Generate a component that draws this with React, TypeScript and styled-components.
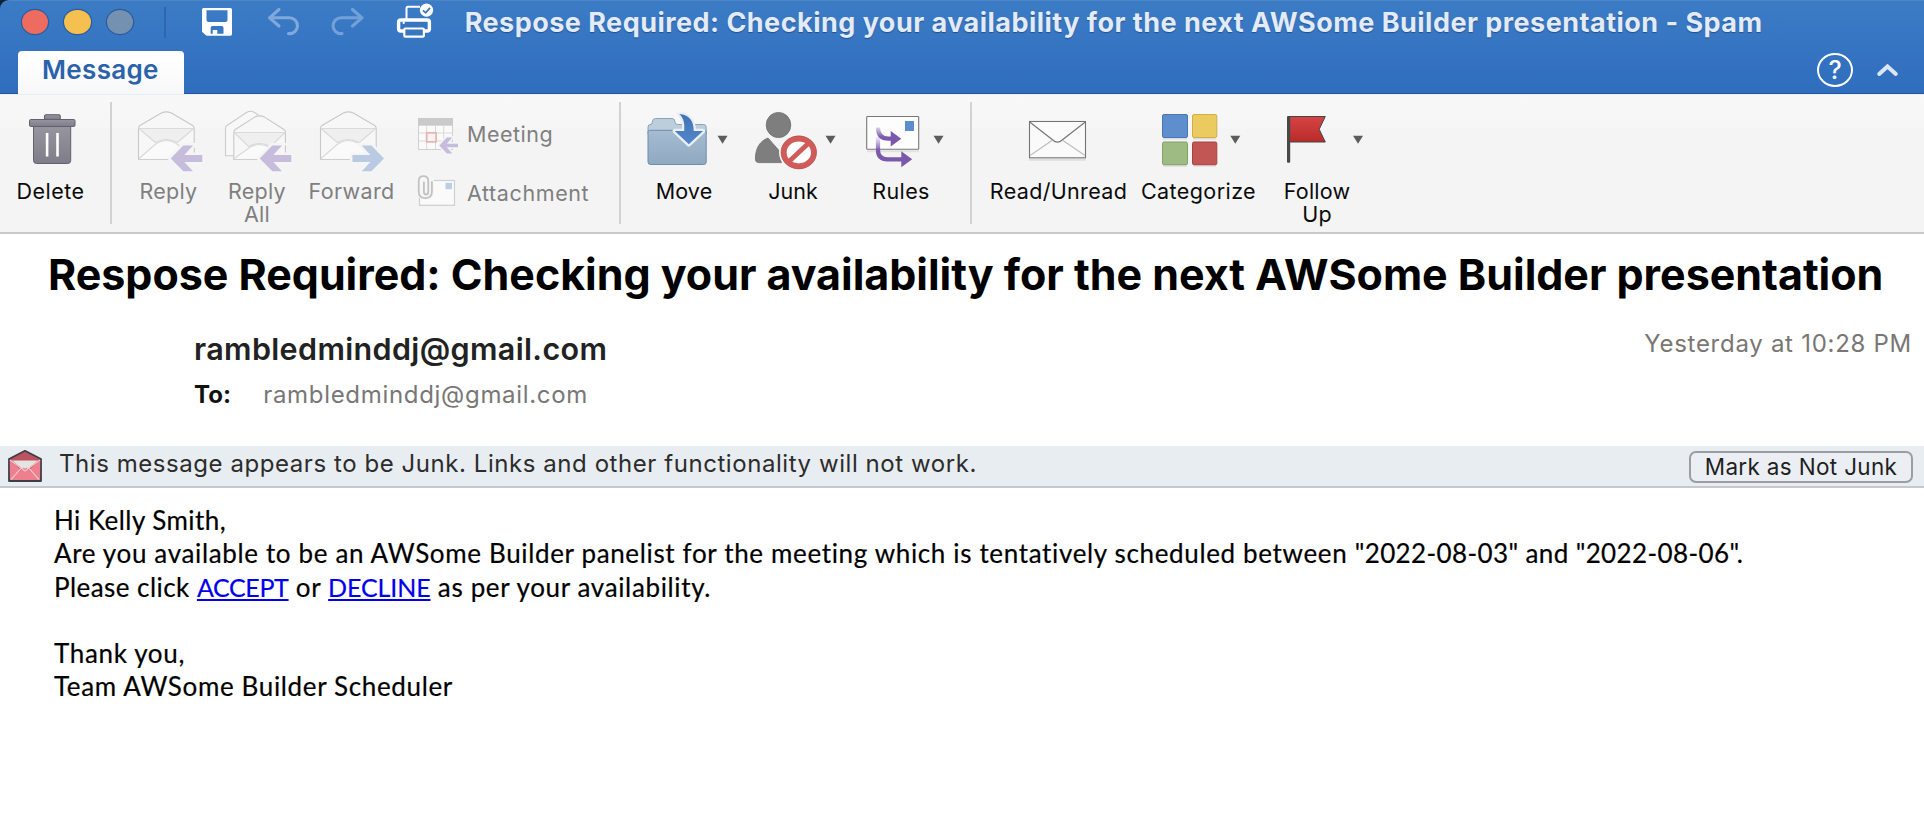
import React from 'react';
import styled, { createGlobalStyle } from 'styled-components';

const GlobalStyle = createGlobalStyle`
  * { box-sizing: border-box; }
  html, body { margin: 0; background: #fff; }
  body { font-family: Inter, "Liberation Sans", sans-serif; overflow: hidden; }
`;

const Window = styled.div`
  width: 1924px;
  height: 820px;
  display: flex;
  flex-direction: column;
  background: #fff;
  overflow: hidden;
`;

/* ---------- title bar ---------- */

const Frame = styled.div`
  background: #10233d;
  flex: none;
`;

const Header = styled.header`
  height: 94px;
  border-top-left-radius: 9px;
  background: linear-gradient(#3c7cc5, #2f6dbe);
  box-shadow: inset 0 1px 0 rgba(255, 255, 255, 0.08), inset 0 -1px 0 #1f569f;
`;

const TitleRow = styled.div`
  height: 44px;
  display: flex;
  align-items: center;
`;

const Lights = styled.div`
  display: flex;
  gap: 16px;
  margin-left: 22px;
`;

const Light = styled.span<{ $color: string }>`
  width: 26.4px;
  height: 24.5px;
  border-radius: 50%;
  background: ${(p) => p.$color};
  box-shadow: 0 0 0 1.2px #2a5d9e;
`;

const TitleDivider = styled.span`
  width: 2px;
  height: 31px;
  margin: 0 34px 0 31px;
  background: #2d67ae;
`;

const Glyph = styled.svg<{ $gap?: number }>`
  display: block;
  flex: none;
  margin-right: ${(p) => p.$gap ?? 0}px;
`;

const WindowTitle = styled.h1`
  margin: 0;
  padding-top: 2px;
  font-size: 27px;
  line-height: 32px;
  font-weight: 700;
  letter-spacing: 0.47px;
  white-space: nowrap;
  color: #e2ebf7;
  text-shadow: 0 1px 1px rgba(20, 50, 100, 0.55);
`;

const TabRow = styled.div`
  height: 50px;
  display: flex;
  align-items: flex-end;
  padding-left: 18px;
`;

const Tab = styled.div`
  width: 165.5px;
  height: 43px;
  padding: 3px 0 0 24px;
  border-radius: 4px 4px 0 0;
  background: linear-gradient(#fff, #f8f8f8);
  color: #2a63ab;
  font-size: 26px;
  line-height: 32px;
  font-weight: 600;
  letter-spacing: 0.33px;
`;

const HeaderActions = styled.div`
  display: flex;
  align-items: center;
  gap: 23px;
  margin: 0 25px 7px auto;
`;

const Help = styled.span`
  width: 36px;
  height: 34px;
  display: flex;
  align-items: center;
  justify-content: center;
  border: 2px solid #fff;
  border-radius: 50%;
  color: #fff;
  font-size: 25px;
  line-height: 28px;
  font-weight: 500;
`;

/* ---------- ribbon ---------- */

const Ribbon = styled.div`
  height: 140px;
  flex: none;
  display: flex;
  align-items: flex-start;
  border-top: 1px solid #e6eefa;
  border-bottom: 2px solid #c9c9c9;
  padding-top: 7px;
  background: linear-gradient(#f8f8f8 0, #f6f6f6 33px, #f4f4f4 34px, #f4f4f4 100%);
`;

const Group = styled.div<{ $left?: number; $right?: number }>`
  display: flex;
  flex: none;
  padding: 4px ${(p) => p.$right ?? 0}px 0 ${(p) => p.$left ?? 0}px;
`;

const Separator = styled.span`
  width: 2px;
  height: 122px;
  flex: none;
  background: #d2d2d2;
`;

const Command = styled.div<{ $width: number; $disabled?: boolean }>`
  width: ${(p) => p.$width}px;
  display: flex;
  flex-direction: column;
  align-items: center;
  gap: 4px;
  color: ${(p) => (p.$disabled ? '#7f7f7f' : '#0a0a0a')};
`;

const Label = styled.span<{ $spacing: number }>`
  font-size: 21.5px;
  line-height: 23px;
  letter-spacing: ${(p) => p.$spacing}px;
  text-align: center;
  white-space: pre;
`;

const SmallCommands = styled.div`
  display: flex;
  flex-direction: column;
  width: 186px;
  margin: -1px 0 0 13px;
`;

const SmallCommand = styled.div`
  height: 58px;
  display: flex;
  align-items: center;
  gap: 1px;
  color: #7f7f7f;

  & + & ${Label} {
    padding-top: 2px;
  }
`;

/* ---------- message header ---------- */

const MessageHead = styled.section`
  height: 212px;
  flex: none;
  padding: 15px 12px 0 48px;
`;

const Subject = styled.h2`
  margin: 0;
  font-size: 43px;
  line-height: 50px;
  font-weight: 700;
  letter-spacing: -0.03px;
  white-space: nowrap;
  color: #000;
`;

const Meta = styled.div`
  display: flex;
  justify-content: space-between;
  padding: 30px 0 0 146px;
`;

const Sender = styled.div`
  font-size: 30.5px;
  line-height: 40px;
  font-weight: 600;
  letter-spacing: 0.36px;
  color: #222;
`;

const Recipient = styled.div`
  display: flex;
  gap: 32px;
  margin-top: 11px;
  font-size: 24px;
  line-height: 30px;
  letter-spacing: 0.69px;
  color: #777;
`;

const ToLabel = styled.b`
  color: #111;
  letter-spacing: 0.1px;
`;

const SentAt = styled.time`
  font-size: 24px;
  line-height: 30px;
  letter-spacing: 0.721px;
  color: #7a7673;
`;

/* ---------- junk notice ---------- */

const JunkBar = styled.div`
  height: 42px;
  flex: none;
  display: flex;
  align-items: center;
  padding: 0 11px 0 5px;
  background: #e8edf1;
  border-bottom: 2px solid #c5c8d0;
`;

const JunkText = styled.span`
  padding: 0 0 4px 12px;
  font-size: 24px;
  line-height: 30px;
  letter-spacing: 0.56px;
  color: #2c2c2c;
`;

const NotJunkButton = styled.button`
  width: 224px;
  height: 32px;
  margin: 2px 0 0 auto;
  padding: 0;
  border: 2px solid #9b9da1;
  border-radius: 7px;
  background: #ebeff3;
  color: #1f1f1f;
  font: 400 22.5px/28px Inter, "Liberation Sans", sans-serif;
  letter-spacing: 0.33px;
`;

/* ---------- body ---------- */

const Body = styled.article`
  padding: 16px 0 0 54px;
  font-family: Lato, "Liberation Sans", sans-serif;
  font-size: 26px;
  line-height: 33.3px;
  letter-spacing: 0.65px;
  color: #000;
  -webkit-text-stroke: 0.2px;
`;

const Line = styled.p`
  margin: 0;
  min-height: 33.3px;
  white-space: nowrap;
`;

const Run = styled.span<{ $spacing: number }>`
  letter-spacing: ${(p) => p.$spacing}px;
`;

const BodyLink = styled.a<{ $spacing: number }>`
  color: #0000ee;
  font-size: 25px;
  letter-spacing: ${(p) => p.$spacing}px;
  text-decoration: underline;
  text-decoration-thickness: 2px;
  text-underline-offset: 2px;
  text-decoration-skip-ink: none;
`;

/* ---------- drawings ---------- */

const Caret = ({ x }: { x: number }) => <path d={`M${x - 5} 135.7h10l-5 8z`} fill="#5c5c5c" />;

const OpenEnvelope = ({ x, y, w }: { x: number; y: number; w: number }) => {
  const c = w / 2;
  const s = 16;
  const h = 159.5 - y;
  return (
    <g transform={`translate(${x} ${y})`} stroke="#c8c8c8" strokeWidth="1.1" strokeLinejoin="round">
      <path d={`M.5 ${h}V${s + 1}Q.5 ${s - 1} 2 ${s - 2}L${c - 5} 1.6Q${c} -.8 ${c + 5} 1.6L${w - 2} ${s - 2}Q${w - 0.5} ${s - 1} ${w - 0.5} ${s + 1}V${h}Z`} fill="#f7f7f7" />
      <path d={`M1 ${s + 1}H${w - 1}L${c + 11} ${s + 15}Q${c} ${s + 9} ${c - 11} ${s + 15}Z`} fill="#efefef" stroke="#dadada" />
      <path d={`M1 ${h - 1}L${c - 10} ${s + 16}Q${c} ${s + 10} ${c + 10} ${s + 16}L${w - 1} ${h - 1}`} fill="#fafafa" stroke="#d9d9d9" />
      <path d={`M0 ${h}H${w}`} stroke="#cfcfcf" />
    </g>
  );
};

const MailArrow = ({ x, flip, color }: { x: number; flip?: boolean; color: string }) => (
  <path
    transform={`translate(${x} 158.4)${flip ? ' scale(-1 1)' : ''}`}
    d="M0 0L12.6 -12.8H22.3L13.6 -3.5H31.6V3.5H13.6L22.3 12.8H12.6Z"
    fill={color}
    stroke="#f5f5f5"
    strokeWidth="5"
    paintOrder="stroke"
  />
);

const commandIcon = (x: number, width: number) => ({
  width,
  height: 70,
  viewBox: `${x} 106 ${width} 70`,
});

const DeleteIcon = () => (
  <Glyph {...commandIcon(0, 101)}>
    <defs>
      <linearGradient id="bin" x2="0" y2="1">
        <stop stopColor="#97969f" />
        <stop offset="1" stopColor="#7d7c89" />
      </linearGradient>
    </defs>
    <g fill="url(#bin)" stroke="#63626c">
      <path d="M33.5 126h37.2v34.5q0 3-3 3H36.5q-3 0-3-3z" />
      <path d="M44.5 119.5v-3.5q0-1.3 1.3-1.3h13.2q1.3 0 1.3 1.3v3.5z" />
      <rect x="29.5" y="119.5" width="45.5" height="7" rx="1.2" />
    </g>
    <path d="M47.1 133v23.5M57.5 133v23.5" stroke="#fff" strokeWidth="2.6" />
  </Glyph>
);

const ReplyIcon = () => (
  <Glyph {...commandIcon(124, 89)}>
    <OpenEnvelope x={138} y={111.5} w={56.7} />
    <MailArrow x={170.7} color="#c6bcdc" />
  </Glyph>
);

const ReplyAllIcon = () => (
  <Glyph {...commandIcon(213, 88)}>
    <path d="M233 155.8h-7.5V128q0-1.5 1.5-2.5l19.5-13q4-2.5 8 0l4 2.5" fill="#f8f8f8" stroke="#cbcbcb" strokeWidth="1.1" />
    <OpenEnvelope x={233.3} y={115.5} w={52.6} />
    <MailArrow x={259.7} color="#c6bcdc" />
  </Glyph>
);

const ForwardIcon = () => (
  <Glyph {...commandIcon(301, 101)}>
    <OpenEnvelope x={320} y={111.5} w={56.7} />
    <MailArrow x={384} flip color="#b9cae2" />
  </Glyph>
);

const MeetingIcon = () => (
  <Glyph width="51" height="58" viewBox="415 105 51 58">
    <rect x="418.5" y="118.5" width="34" height="31" fill="#fafafa" stroke="#d0d0d0" />
    <path d="M418.5 133h34M418.5 141h34M426.7 126v23M435.5 126v23M443.7 126v23" stroke="#d9d9d9" />
    <rect x="418" y="118" width="35" height="7.7" fill="#cacaca" />
    <rect x="426.7" y="132.8" width="9.4" height="9" fill="#faf3f3" stroke="#e8b3b3" strokeWidth="1.7" />
    <path d="M439.3 145.5l7.5-8h5.5l-5.5 6.2H458v3.5h-11.2l5.5 6.2h-5.5z" fill="#c6bcdc" stroke="#f5f5f5" strokeWidth="3" paintOrder="stroke" />
  </Glyph>
);

const AttachmentIcon = () => (
  <Glyph width="51" height="58" viewBox="415 163 51 58">
    <rect x="419.5" y="180.5" width="35" height="24.8" fill="#fafafa" stroke="#cfcfcf" strokeWidth="1.2" />
    <rect x="445.5" y="182.8" width="6.5" height="6.4" fill="#bccde8" />
    <rect x="416.5" y="174" width="17.5" height="25.5" rx="8" fill="#f6f6f6" />
    <path
      d="M428.3 181.5v10q0 3-2.2 3t-2.2-3v-9M418.7 182v-1q0-4.8 4.8-4.8t4.8 4.8M418.7 181v10.5q0 6.7 6.6 6.7t6.6-6.7V182"
      fill="none"
      stroke="#c2c2c2"
      strokeWidth="1.8"
      strokeLinecap="round"
    />
  </Glyph>
);

const MoveIcon = () => (
  <Glyph {...commandIcon(632, 104)}>
    <defs>
      <linearGradient id="folder" x2="0" y2="1">
        <stop stopColor="#a5bcd1" />
        <stop offset="1" stopColor="#8fa9c2" />
      </linearGradient>
      <linearGradient id="drop" x2="0" y2="1">
        <stop stopColor="#3f72b8" />
        <stop offset="1" stopColor="#5487c9" />
      </linearGradient>
    </defs>
    <path d="M648 134v-7q0-2.5 3-2.7 1 0 1.2-2 .3-3.8 3.3-3.8H672q2.7 0 3 3.3 0 2.7 2.5 2.7H703.5q2.7 0 2.7 2.7V134z" fill="#bccddb" stroke="#8ba3ba" />
    <path d="M648 132q0-1.7 1.7-1.7h54.8q1.7 0 1.7 1.7v30q0 2.5-2.5 2.5h-53.2q-2.5 0-2.5-2.5z" fill="url(#folder)" stroke="#6f8da9" />
    <path d="M679.3 114C689 114.5 694 121 693.7 131H703L688.8 144.3 674.8 131H684.2C685 123 683.5 118 679.3 114Z" fill="url(#drop)" stroke="#e9eff6" strokeWidth="4.5" strokeLinejoin="round" paintOrder="stroke" />
    <Caret x={722.5} />
  </Glyph>
);

const JunkIcon = () => (
  <Glyph {...commandIcon(736, 114)}>
    <g fill="#7e7e7e" stroke="#6e6e6e" strokeWidth=".8">
      <ellipse cx="778.5" cy="125" rx="12.3" ry="12.6" />
      <path d="M768 138L779 150.5 781.5 162.6H758.5Q755.4 162.6 755.4 159C755.4 148 760 141 768 138Z" />
    </g>
    <ellipse cx="798.8" cy="152.4" rx="19.8" ry="18.5" fill="#f5f5f5" />
    <ellipse cx="798.8" cy="152.4" rx="15" ry="13.8" fill="#fff" stroke="#d05c59" strokeWidth="5.6" />
    <path d="M788.5 162L809 142.8" stroke="#d05c59" strokeWidth="4.8" />
    <ellipse cx="798.8" cy="152.4" rx="17.7" ry="16.4" fill="none" stroke="#bd4a48" strokeWidth=".7" />
    <Caret x={830.5} />
  </Glyph>
);

const RulesIcon = () => (
  <Glyph {...commandIcon(850, 102)}>
    <defs>
      <linearGradient id="stem" gradientUnits="userSpaceOnUse" x1="0" x2="0" y1="127" y2="137">
        <stop stopColor="#7a58ac" stopOpacity=".2" />
        <stop offset="1" stopColor="#7a58ac" />
      </linearGradient>
      <linearGradient id="stemLow" gradientUnits="userSpaceOnUse" x1="0" x2="0" y1="138" y2="151">
        <stop stopColor="#7a58ac" stopOpacity=".15" />
        <stop offset="1" stopColor="#7a58ac" />
      </linearGradient>
    </defs>
    <path d="M867 151.3h52" stroke="#e2e2e2" strokeWidth="2" />
    <rect x="866.7" y="116.5" width="52" height="32.7" rx=".8" fill="#fdfdfd" stroke="#777" strokeWidth="1.1" />
    <rect x="905" y="121" width="9" height="10" fill="#5d8ccf" />
    <g fill="none" strokeWidth="4.2">
      <path d="M878 127.5Q878 138.7 888.5 138.7H892" stroke="url(#stem)" />
      <path d="M878 137V150Q878 159.3 887.5 159.3H903" stroke="url(#stemLow)" />
    </g>
    <path d="M890.7 131L901.3 138.7 890.7 146.5zM901.3 151.2L912.2 159.3 901.3 167.3z" fill="#7a58ac" />
    <Caret x={938.5} />
  </Glyph>
);

const ReadIcon = () => (
  <Glyph {...commandIcon(982, 153)}>
    <path d="M1029 159.7h57" stroke="#dedede" strokeWidth="2" />
    <rect x="1029.5" y="121.5" width="56" height="36.3" fill="#fafafa" stroke="#747474" strokeWidth="1.1" />
    <path d="M1030 155.5L1052 140.5M1085 155.5L1063 140.5" stroke="#c0c0c0" strokeWidth="1.4" />
    <path d="M1029.7 122L1052.5 139.7Q1057.5 144.5 1062.5 139.7L1085.3 122" fill="#fbfbfb" stroke="#777" strokeWidth="1.2" />
  </Glyph>
);

const CategorizeIcon = () => (
  <Glyph {...commandIcon(1135, 127)}>
    <path d="M1163 138.5h24M1193 138.5h23M1163 165.7h24M1193 165.7h23" stroke="#dcdcdc" strokeWidth="2" />
    <rect x="1162.5" y="114.5" width="25" height="23" rx="1.5" fill="#5f8ecd" stroke="#4a76b4" />
    <rect x="1192.5" y="114.5" width="24.3" height="23" rx="1.5" fill="#ebca60" stroke="#cfae48" />
    <rect x="1162.5" y="142" width="25" height="22.7" rx="1.5" fill="#9dbb82" stroke="#81a167" />
    <rect x="1192.5" y="142" width="24.3" height="22.7" rx="1.5" fill="#c15654" stroke="#a44240" />
    <Caret x={1235.3} />
  </Glyph>
);

const FlagIcon = () => (
  <Glyph {...commandIcon(1262, 110)}>
    <defs>
      <linearGradient id="flag" x2="0" y2="1">
        <stop stopColor="#d64444" />
        <stop offset="1" stopColor="#b82b29" />
      </linearGradient>
    </defs>
    <path d="M1289 116.5H1325.3L1319.2 129.3 1325.3 142H1289z" fill="url(#flag)" stroke="#444" strokeWidth="1" />
    <rect x="1287" y="116" width="3.2" height="46.7" rx="1" fill="#484848" />
    <Caret x={1358} />
  </Glyph>
);

const JunkMailIcon = () => (
  <Glyph width="42" height="38" viewBox="5 449 42 38">
    <path d="M9 461L25 452.8 41 461V483H9Z" fill="#bd5260" stroke="#3c3f44" strokeWidth="1.8" strokeLinejoin="round" />
    <path d="M12 462.5h26L25 473z" fill="#e4e2e2" />
    <path d="M9.8 462L20.5 471.5 10 482.2zM40.2 462L29.5 471.5 40 482.2z" fill="#ee7f8f" />
    <path d="M10 482L25 468.5 40 482z" fill="#ee7f8f" />
    <path d="M10 462L25 473 40 462M11 481.5L21 470.5M39 481.5L29 470.5" fill="none" stroke="#f3c4ca" strokeWidth="1.2" />
    <path d="M17.5 464.5H32.5L25 470.8z" fill="#e4e4e2" />
  </Glyph>
);

const SaveIcon = () => (
  <Glyph width="34" height="32" viewBox="200 6 34 32" $gap={33}>
    <path
      d="M203.5 8H230.5Q232 8 232 9.5V34.3Q232 35.7 230.5 35.7H206.5L202 31.8V9.5Q202 8 203.5 8ZM206.5 10.3V20Q206.5 22 208.5 22H225.5Q227.5 22 227.5 20V10.3ZM212.5 26Q210.7 26 210.7 27.7V33.7H212.7V30H217.3V33.7H223.5V27.7Q223.5 26 221.7 26Z"
      fill="#fff"
      fillRule="evenodd"
    />
  </Glyph>
);

const UndoIcon = () => (
  <Glyph width="34" height="32" viewBox="267 6 34 32" $gap={29}>
    <path d="M279 9.5L269.5 17.8 279 26M270 17.8H289.5A8 7.9 0 0 1 289.5 33.6H288.5" fill="none" stroke="#7fa8dc" strokeWidth="3.1" strokeLinecap="round" strokeLinejoin="round" />
  </Glyph>
);

const RedoIcon = () => (
  <Glyph width="34" height="32" viewBox="330 6 34 32" $gap={30}>
    <path d="M352.5 9.5L362 17.8 352.5 26M361.5 17.8H341A8 7.9 0 0 0 341 33.6H342" fill="none" stroke="#74a0d8" strokeWidth="3.1" strokeLinecap="round" strokeLinejoin="round" />
  </Glyph>
);

const PrintIcon = () => (
  <Glyph width="42" height="38" viewBox="394 3 42 38" $gap={28.5}>
    <path d="M406.5 19V8.3Q406.5 6.8 408 6.8H420" fill="none" stroke="#fff" strokeWidth="2" />
    <rect x="398.6" y="20" width="30.8" height="11" rx="2.2" fill="#3876c2" stroke="#fff" strokeWidth="3.4" />
    <rect x="404.3" y="28.5" width="19.6" height="8.2" rx="1" fill="#3876c2" stroke="#fff" strokeWidth="2.2" />
    <circle cx="403.7" cy="22.8" r="1.2" fill="#fff" />
    <circle cx="426.5" cy="10.2" r="6.6" fill="#fff" />
    <path d="M423 10.4L425.7 12.8 430 7.8" fill="none" stroke="#3876c2" strokeWidth="1.8" />
  </Glyph>
);

export default function App() {
  return (
    <Window>
      <GlobalStyle />
      <Frame>
        <Header>
          <TitleRow>
            <Lights>
              <Light $color="#ee6b60" />
              <Light $color="#f5c04f" />
              <Light $color="#7591b2" />
            </Lights>
            <TitleDivider />
            <SaveIcon />
            <UndoIcon />
            <RedoIcon />
            <PrintIcon />
            <WindowTitle>Respose Required: Checking your availability for the next AWSome Builder presentation - Spam</WindowTitle>
          </TitleRow>
          <TabRow>
            <Tab>Message</Tab>
            <HeaderActions>
              <Help>?</Help>
              <Glyph width="23" height="16" viewBox="0 0 23 16">
                <path d="M3.2 12L11.5 4.5L19.8 12" fill="none" stroke="#dbe6f5" strokeWidth="4" strokeLinecap="round" strokeLinejoin="miter" />
              </Glyph>
            </HeaderActions>
          </TabRow>
        </Header>
      </Frame>

      <Ribbon>
        <Group $right={9}>
          <Command $width={101}>
            <DeleteIcon />
            <Label $spacing={0.5}>Delete</Label>
          </Command>
        </Group>
        <Separator />
        <Group $left={12} $right={18}>
          <Command $width={89} $disabled>
            <ReplyIcon />
            <Label $spacing={0.25}>Reply</Label>
          </Command>
          <Command $width={88} $disabled>
            <ReplyAllIcon />
            <Label $spacing={0.25}>{'Reply\nAll'}</Label>
          </Command>
          <Command $width={101} $disabled>
            <ForwardIcon />
            <Label $spacing={0.35}>Forward</Label>
          </Command>
          <SmallCommands>
            <SmallCommand>
              <MeetingIcon />
              <Label $spacing={0.5}>Meeting</Label>
            </SmallCommand>
            <SmallCommand>
              <AttachmentIcon />
              <Label $spacing={0.6}>Attachment</Label>
            </SmallCommand>
          </SmallCommands>
        </Group>
        <Separator />
        <Group $left={11} $right={18}>
          <Command $width={104}>
            <MoveIcon />
            <Label $spacing={0.15}>Move</Label>
          </Command>
          <Command $width={114}>
            <JunkIcon />
            <Label $spacing={0}>Junk</Label>
          </Command>
          <Command $width={102}>
            <RulesIcon />
            <Label $spacing={0.4}>Rules</Label>
          </Command>
        </Group>
        <Separator />
        <Group $left={10}>
          <Command $width={153}>
            <ReadIcon />
            <Label $spacing={0.33}>Read/Unread</Label>
          </Command>
          <Command $width={127}>
            <CategorizeIcon />
            <Label $spacing={0.42}>Categorize</Label>
          </Command>
          <Command $width={110}>
            <FlagIcon />
            <Label $spacing={0.2}>{'Follow\nUp'}</Label>
          </Command>
        </Group>
      </Ribbon>

      <MessageHead>
        <Subject>Respose Required: Checking your availability for the next AWSome Builder presentation</Subject>
        <Meta>
          <div>
            <Sender>rambledminddj@gmail.com</Sender>
            <Recipient>
              <ToLabel>To:</ToLabel>
              <span>rambledminddj@gmail.com</span>
            </Recipient>
          </div>
          <SentAt>Yesterday at 10:28 PM</SentAt>
        </Meta>
      </MessageHead>

      <JunkBar>
        <JunkMailIcon />
        <JunkText>This message appears to be Junk. Links and other functionality will not work.</JunkText>
        <NotJunkButton>Mark as Not Junk</NotJunkButton>
      </JunkBar>

      <Body>
        <Line>
          <Run $spacing={0.45}>Hi Kelly Smith,</Run>
        </Line>
        <Line>
          Are you available to be an AWSome Builder panelist for the meeting which is tentatively scheduled between{' '}
          <Run $spacing={0.38}>"2022-08-03" and "2022-08-06".</Run>
        </Line>
        <Line>
          <Run $spacing={0.45}>Please click </Run>
          <BodyLink $spacing={-0.35}>ACCEPT</BodyLink> or <BodyLink $spacing={-0.1}>DECLINE</BodyLink> as per your
          availability.
        </Line>
        <Line />
        <Line>Thank you,</Line>
        <Line>Team AWSome Builder Scheduler</Line>
      </Body>
    </Window>
  );
}
